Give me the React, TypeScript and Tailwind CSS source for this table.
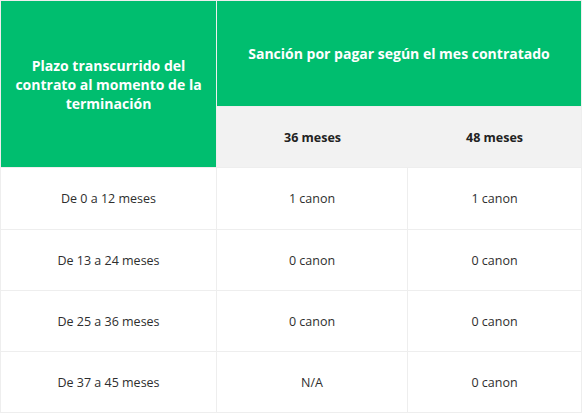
import React from "react";

const rows: [string, string, string][] = [
  ["De 0 a 12 meses", "1 canon", "1 canon"],
  ["De 13 a 24 meses", "0 canon", "0 canon"],
  ["De 25 a 36 meses", "0 canon", "0 canon"],
  ["De 37 a 45 meses", "N/A", "0 canon"],
];

export default function App() {
  return (
    <div
      className="w-[582px] h-[413px] bg-white"
      style={{ fontFamily: '"Open Sans", sans-serif' }}
    >
      <div className="grid grid-cols-[215px_190px_173px] grid-rows-[105px_60px_61px_60px_60px_60px] gap-px bg-[#eeeeee] p-px">
        <div className="row-span-2 bg-[#00be6f] text-white font-bold text-[14px] leading-[19px] flex items-center justify-center text-center px-2 pt-[1px]">
          Plazo transcurrido del contrato al momento de la terminación
        </div>
        <div className="col-span-2 bg-[#00be6f] text-white font-bold text-[14px] flex items-center justify-center text-center">
          Sanción por pagar según el mes contratado
        </div>
        <div className="col-span-2 bg-[#f2f2f2] grid grid-cols-[191px_173px] text-[12.5px] font-bold text-[#222] pt-[2px]">
          <div className="flex items-center justify-center">36 meses</div>
          <div className="flex items-center justify-center">48 meses</div>
        </div>
        {rows.map((r, i) => (
          <React.Fragment key={i}>
            {r.map((c, j) => (
              <div
                key={j}
                className="bg-white flex items-center justify-center text-[12.5px] text-[#2e2e2e] pt-[2px]"
              >
                {c}
              </div>
            ))}
          </React.Fragment>
        ))}
      </div>
    </div>
  );
}
